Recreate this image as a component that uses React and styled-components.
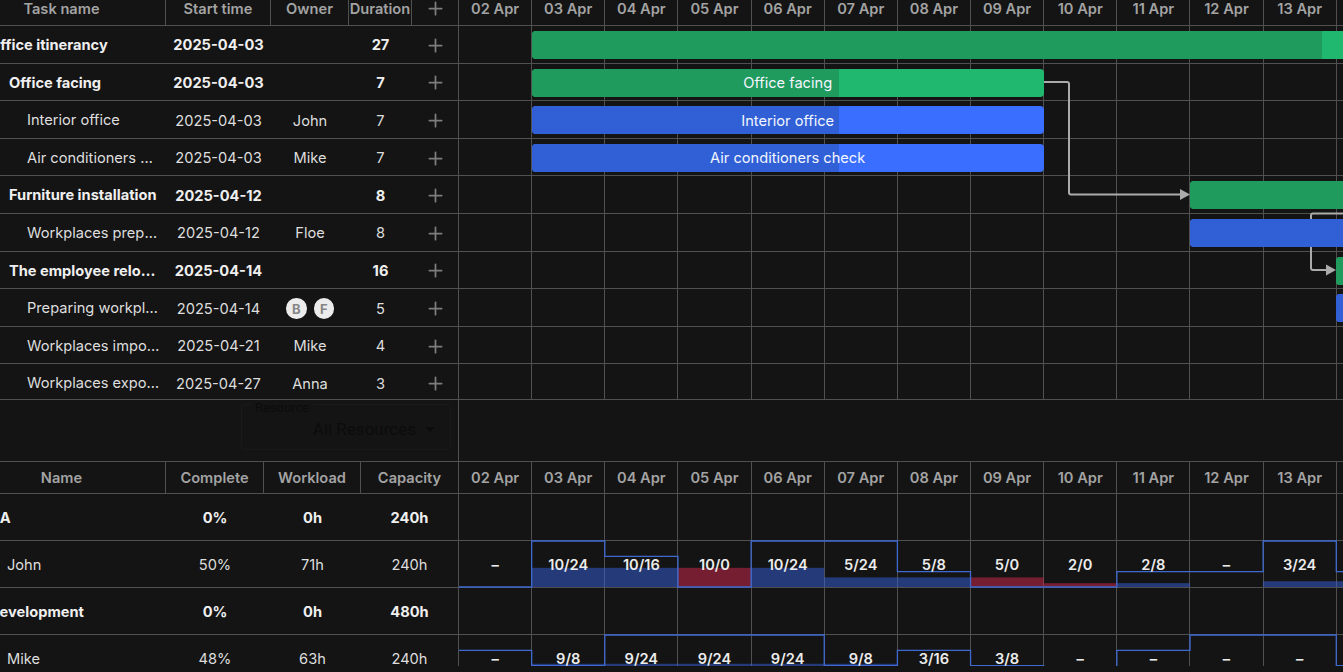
import React from 'react';
import styled, { createGlobalStyle } from 'styled-components';
import { Plus } from 'lucide-react';

const DAY = 73.15;
const LOAD_ROW = 46;
const PER_HOUR = LOAD_ROW / 24;
const LINE = '#505050';
const DATES = ['02', '03', '04', '05', '06', '07', '08', '09', '10', '11', '12', '13', '14'];

const TASKS = [
	{ name: 'Office itinerancy', start: '2025-04-03', duration: 27, level: 0, bold: true, bar: { day: 1, color: 'green', progress: 40 } },
	{ name: 'Office facing', start: '2025-04-03', duration: 7, level: 1, bold: true, bar: { day: 1, color: 'green', progress: 60 } },
	{ name: 'Interior office', start: '2025-04-03', owner: 'John', duration: 7, level: 2, bar: { day: 1, color: 'blue', progress: 60 } },
	{ name: 'Air conditioners check', start: '2025-04-03', owner: 'Mike', duration: 7, level: 2, bar: { day: 1, color: 'blue', progress: 60 } },
	{ name: 'Furniture installation', start: '2025-04-12', duration: 8, level: 1, bold: true, bar: { day: 10, color: 'green', progress: 60 } },
	{ name: 'Workplaces preparation', start: '2025-04-12', owner: 'Floe', duration: 8, level: 2, bar: { day: 10, color: 'blue', progress: 60 } },
	{ name: 'The employee relocation', start: '2025-04-14', duration: 16, level: 1, bold: true, bar: { day: 12, color: 'green', progress: 40 } },
	{ name: 'Preparing workplaces', start: '2025-04-14', avatars: ['B', 'F'], duration: 5, level: 2, bar: { day: 12, color: 'blue', progress: 40 } },
	{ name: 'Workplaces importation', start: '2025-04-21', owner: 'Mike', duration: 4, level: 2 },
	{ name: 'Workplaces exportation', start: '2025-04-27', owner: 'Anna', duration: 3, level: 2 },
];

const RESOURCES = [
	{ name: 'QA', complete: '0%', workload: '0h', capacity: '240h', group: true },
	{
		name: 'John',
		complete: '50%',
		workload: '71h',
		capacity: '240h',
		days: [[0, 0], [10, 24], [10, 16], [10, 0], [10, 24], [5, 24], [5, 8], [5, 0], [2, 0], [2, 8], [0, 8], [3, 24], [3, 8]],
	},
	{ name: 'Development', complete: '0%', workload: '0h', capacity: '480h', group: true },
	{
		name: 'Mike',
		complete: '48%',
		workload: '63h',
		capacity: '240h',
		days: [[0, 16], [9, 8], [9, 24], [9, 24], [9, 24], [9, 8], [3, 16], [3, 8], [0, 0], [0, 16], [0, 24], [0, 24], [0, 8]],
	},
];

const GlobalStyle = createGlobalStyle`
	html, body {
		margin: 0;
		background: #141414;
		overflow: hidden;
	}
	body {
		font-family: Inter, "Liberation Sans", sans-serif;
		font-size: 14.63px;
		color: #e4e4e4;
	}
`;

const Page = styled.div`
	width: 1343px;
	height: 672px;
	overflow: hidden;
`;

const Board = styled.div`
	width: 1385px;
	margin: -10px 0 0 -42px;
`;

const GanttSection = styled.section`
	display: flex;
	height: 410px;
	overflow: hidden;
	border-bottom: 1px solid ${LINE};
	box-sizing: border-box;
`;

const LoadSection = styled.section`
	display: flex;
	height: 205px;
	overflow: hidden;
	border-top: 1px solid ${LINE};
	box-sizing: border-box;
`;

const Middle = styled.div`
	display: flex;
	height: 61px;
`;

const LeftPane = styled.div`
	flex: none;
	width: 501px;
	box-sizing: border-box;
	border-right: 1px solid ${LINE};
`;

const RightPane = styled.div`
	flex: none;
	width: 884px;
	overflow: hidden;
`;

const MiddleLeft = styled(LeftPane)`
	display: flex;
	justify-content: flex-end;
	padding: 4px 7px 11px 0;
`;

const Select = styled.div`
	position: relative;
	width: 210px;
	box-sizing: border-box;
	display: flex;
	align-items: center;
	justify-content: flex-end;
	gap: 9px;
	padding: 4px 15px 0 0;
	border: 1px solid #1a1a1a;
	border-radius: 4px;
	color: #0c0c0c;
	font-family: Roboto, sans-serif;
	font-size: 17px;
`;

const SelectLabel = styled.span`
	position: absolute;
	top: -4px;
	left: 9px;
	padding: 0 4px;
	background: #141414;
	font-size: 13px;
	line-height: 14px;
`;

const Caret = styled.span`
	width: 0;
	height: 0;
	border: 5px solid transparent;
	border-top-color: #0c0c0c;
	border-bottom: 0;
`;

const HeadRow = styled.div`
	display: flex;
	height: ${p => p.$height}px;
	box-sizing: border-box;
	border-bottom: 1px solid ${LINE};
`;

const HeadCell = styled.div`
	flex: none;
	width: ${p => p.$width}px;
	box-sizing: border-box;
	display: flex;
	align-items: center;
	justify-content: center;
	border-right: ${p => (p.$plain ? 'none' : `1px solid ${LINE}`)};
	padding-top: ${p => p.$shift || 0}px;
	color: #a3a3a3;
	font-weight: 600;
	white-space: nowrap;
`;

const DayHead = styled(HeadCell)`
	width: ${DAY}px;
`;

const Row = styled.div`
	display: flex;
	height: ${p => p.$height}px;
	box-sizing: border-box;
	border-bottom: 1px solid ${LINE};
	font-weight: ${p => (p.$bold ? 700 : 400)};
	color: ${p => (p.$bold ? '#efefef' : '#dedede')};
`;

const NameCell = styled.div`
	flex: none;
	width: ${p => p.$width}px;
	box-sizing: border-box;
	padding: 1px 6px 0 ${p => p.$indent}px;
	line-height: ${p => p.$height - 1}px;
	overflow: hidden;
	white-space: nowrap;
	text-overflow: ellipsis;
`;

const Cell = styled.div`
	flex: none;
	width: ${p => p.$width}px;
	box-sizing: border-box;
	padding-top: 2px;
	display: flex;
	align-items: center;
	justify-content: center;
	gap: 7px;
	white-space: nowrap;
`;

const AddIcon = styled(Plus)`
	color: #7d7d7d;
`;

const Avatar = styled.span`
	width: 20.5px;
	height: 20.5px;
	border-radius: 50%;
	background: #ececec;
	color: #858585;
	font-size: 13px;
	font-weight: 700;
	display: flex;
	align-items: center;
	justify-content: center;
`;

const Timeline = styled.div`
	position: relative;
`;

const GridRow = styled(Row)`
	position: relative;
	width: max-content;
`;

const DayCell = styled.div`
	flex: none;
	width: ${DAY}px;
	box-sizing: border-box;
	border-right: 1px solid ${LINE};
`;

const Links = styled.svg`
	position: absolute;
	top: 0;
	left: 0;
	width: 884px;
	height: 376px;
	z-index: 1;
`;

const Bar = styled.div`
	position: absolute;
	z-index: 2;
	top: 5px;
	left: ${p => p.$day * DAY - 0.5}px;
	width: ${p => p.$days * DAY}px;
	height: 28px;
	padding-top: 1px;
	box-sizing: border-box;
	border-radius: 4px;
	overflow: hidden;
	background: ${p => (p.$color === 'green' ? '#20b76e' : '#3a6eff')};
	display: flex;
	align-items: center;
	justify-content: center;
`;

const BarProgress = styled.div`
	position: absolute;
	top: 0;
	bottom: 0;
	left: 0;
	width: ${p => p.$value}%;
	background: ${p => (p.$color === 'green' ? '#1f9b5d' : '#3160d6')};
`;

const BarLabel = styled.span`
	position: relative;
	color: #f2f5ff;
	font-weight: 400;
	white-space: nowrap;
`;

const LoadRow = styled(GridRow)``;

const LoadCell = styled(DayCell)`
	display: flex;
	align-items: center;
	justify-content: center;
	padding-top: 2px;
	font-weight: 600;
	color: #ececec;
`;

const LoadValue = styled.span`
	position: relative;
	z-index: 1;
`;

const LoadChart = styled.svg`
	position: absolute;
	top: 0;
	left: 0;
	width: ${DATES.length * DAY}px;
	height: 47px;
	overflow: visible;
`;

const loadLabel = ([load, cap]) => (load ? `${load}/${cap}` : '–');

const Histogram = ({ days }) => {
	const y = hours => LOAD_ROW - hours * PER_HOUR;
	const line = days
		.map(([, cap], i) => `${i === 0 ? 'M' : 'L'}${i * DAY - 0.5} ${y(cap)} L${(i + 1) * DAY - 0.5} ${y(cap)}`)
		.join(' ');
	return (
		<LoadChart>
			{days.map(([load, cap], i) =>
				load > 0 ? (
					<rect
						key={i}
						x={i * DAY - 0.5}
						y={y(load)}
						width={DAY}
						height={load * PER_HOUR}
						fill={cap === 0 ? 'rgba(214, 38, 78, 0.5)' : 'rgba(58, 104, 235, 0.47)'}
					/>
				) : null
			)}
			<path d={line} fill="none" stroke="#3f69cf" strokeWidth="1.3" />
		</LoadChart>
	);
};

const TaskTable = () => (
	<LeftPane>
		<HeadRow $height={36}>
			<HeadCell $width={208} $shift={2}>Task name</HeadCell>
			<HeadCell $width={105} $shift={2}>Start time</HeadCell>
			<HeadCell $width={78} $shift={2}>Owner</HeadCell>
			<HeadCell $width={63} $shift={2}>Duration</HeadCell>
			<HeadCell $width={46} $shift={2} $plain>
				<AddIcon size={21} />
			</HeadCell>
		</HeadRow>
		{TASKS.map(task => (
			<Row key={task.name} $height={37.62} $bold={task.bold}>
				<NameCell $width={208} $height={37.62} $indent={task.level === 0 ? 31 : 33 + task.level * 18}>
					{task.name}
				</NameCell>
				<Cell $width={105}>{task.start}</Cell>
				<Cell $width={78}>
					{task.owner}
					{task.avatars && task.avatars.map(a => <Avatar key={a}>{a}</Avatar>)}
				</Cell>
				<Cell $width={63}>{task.duration}</Cell>
				<Cell $width={46}>
					<AddIcon size={21} />
				</Cell>
			</Row>
		))}
	</LeftPane>
);

const GanttChart = () => (
	<RightPane>
		<HeadRow $height={36}>
			{DATES.map(d => (
				<DayHead key={d} $shift={2}>{d} Apr</DayHead>
			))}
		</HeadRow>
		<Timeline>
			<Links>
				<path
					d="M585 56 H608 Q610 56 610 58 V166.5 Q610 168.5 612 168.5 H723"
					fill="none"
					stroke="#ababab"
					strokeWidth="2"
				/>
				<polygon points="721,163 731,168.5 721,174" fill="#ababab" />
				<path d="M884 187.5 H854 Q852 187.5 852 189.5 V242 Q852 244 854 244 H868" fill="none" stroke="#ababab" strokeWidth="2" />
				<polygon points="867,238.5 877,244 867,249.5" fill="#ababab" />
			</Links>
			{TASKS.map(task => (
				<GridRow key={task.name} $height={37.62}>
					{DATES.map(d => (
						<DayCell key={d} />
					))}
					{task.bar && (
						<Bar $day={task.bar.day} $days={task.duration} $color={task.bar.color}>
							<BarProgress $value={task.bar.progress} $color={task.bar.color} />
							<BarLabel>{task.name}</BarLabel>
						</Bar>
					)}
				</GridRow>
			))}
		</Timeline>
	</RightPane>
);

const ResourceTable = () => (
	<LeftPane>
		<HeadRow $height={32}>
			<HeadCell $width={208}>Name</HeadCell>
			<HeadCell $width={98}>Complete</HeadCell>
			<HeadCell $width={97}>Workload</HeadCell>
			<HeadCell $width={97} $plain>Capacity</HeadCell>
		</HeadRow>
		{RESOURCES.map(res => (
			<Row key={res.name} $height={47} $bold={res.group}>
				<NameCell $width={208} $height={47} $indent={res.group ? 31 : 49}>
					{res.name}
				</NameCell>
				<Cell $width={98}>{res.complete}</Cell>
				<Cell $width={97}>{res.workload}</Cell>
				<Cell $width={97}>{res.capacity}</Cell>
			</Row>
		))}
	</LeftPane>
);

const ResourceChart = () => (
	<RightPane>
		<HeadRow $height={32}>
			{DATES.map(d => (
				<DayHead key={d}>{d} Apr</DayHead>
			))}
		</HeadRow>
		{RESOURCES.map(res => (
			<LoadRow key={res.name} $height={47}>
				{DATES.map((d, i) => (
					<LoadCell key={d}>
						{res.days && <LoadValue>{loadLabel(res.days[i])}</LoadValue>}
					</LoadCell>
				))}
				{res.days && <Histogram days={res.days} />}
			</LoadRow>
		))}
	</RightPane>
);

export default function App() {
	return (
		<Page>
			<GlobalStyle />
			<Board>
				<GanttSection>
					<TaskTable />
					<GanttChart />
				</GanttSection>
				<Middle>
					<MiddleLeft>
						<Select>
							<SelectLabel>Resource</SelectLabel>
							All Resources
							<Caret />
						</Select>
					</MiddleLeft>
				</Middle>
				<LoadSection>
					<ResourceTable />
					<ResourceChart />
				</LoadSection>
			</Board>
		</Page>
	);
}
